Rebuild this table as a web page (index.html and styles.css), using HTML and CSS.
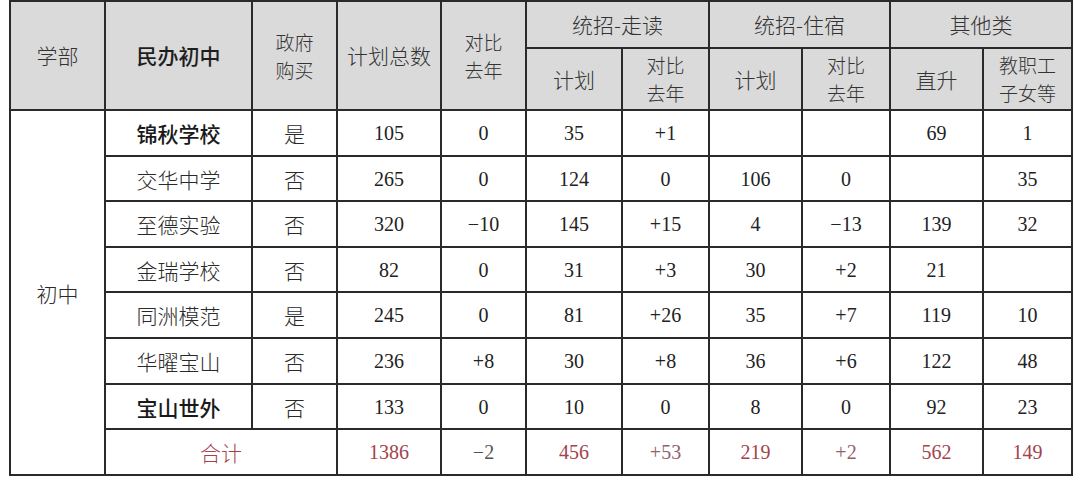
FILE: index.html
```html
<!DOCTYPE html>
<html lang="zh">
<head>
<meta charset="utf-8">
<link rel="stylesheet" href="styles.css">
</head>
<body>
<div class="wrap">
<table class="plan">
  <colgroup>
    <col class="c95"><col class="c147"><col class="c85"><col class="c104"><col class="c85">
    <col class="c96"><col class="c87"><col class="c93"><col class="c88"><col class="c93"><col class="c89">
  </colgroup>
  <thead>
    <tr class="h1">
      <th rowspan="2">学部</th>
      <th rowspan="2" class="b">民办初中</th>
      <th rowspan="2"><span class="ln">政府</span><span class="ln">购买</span></th>
      <th rowspan="2">计划总数</th>
      <th rowspan="2"><span class="ln">对比</span><span class="ln">去年</span></th>
      <th colspan="2">统招-走读</th>
      <th colspan="2">统招-住宿</th>
      <th colspan="2">其他类</th>
    </tr>
    <tr class="h2">
      <th>计划</th><th><span class="ln">对比</span><span class="ln">去年</span></th>
      <th>计划</th><th><span class="ln">对比</span><span class="ln">去年</span></th>
      <th>直升</th><th><span class="ln">教职工</span><span class="ln">子女等</span></th>
    </tr>
  </thead>
  <tbody>
    <tr class="r46">
      <td rowspan="8" class="zh">初中</td>
      <td class="zh b">锦秋学校</td><td class="zh">是</td>
      <td>105</td><td>0</td><td>35</td><td>+1</td><td></td><td></td><td>69</td><td>1</td>
    </tr>
    <tr class="r45">
      <td class="zh">交华中学</td><td class="zh">否</td>
      <td>265</td><td>0</td><td>124</td><td>0</td><td>106</td><td>0</td><td></td><td>35</td>
    </tr>
    <tr class="r46">
      <td class="zh">至德实验</td><td class="zh">否</td>
      <td>320</td><td>−10</td><td>145</td><td>+15</td><td>4</td><td>−13</td><td>139</td><td>32</td>
    </tr>
    <tr class="r45">
      <td class="zh">金瑞学校</td><td class="zh">否</td>
      <td>82</td><td>0</td><td>31</td><td>+3</td><td>30</td><td>+2</td><td>21</td><td></td>
    </tr>
    <tr class="r46">
      <td class="zh">同洲模范</td><td class="zh">是</td>
      <td>245</td><td>0</td><td>81</td><td>+26</td><td>35</td><td>+7</td><td>119</td><td>10</td>
    </tr>
    <tr class="r46">
      <td class="zh">华曜宝山</td><td class="zh">否</td>
      <td>236</td><td>+8</td><td>30</td><td>+8</td><td>36</td><td>+6</td><td>122</td><td>48</td>
    </tr>
    <tr class="r45">
      <td class="zh b">宝山世外</td><td class="zh">否</td>
      <td>133</td><td>0</td><td>10</td><td>0</td><td>8</td><td>0</td><td>92</td><td>23</td>
    </tr>
    <tr class="r46 total">
      <td colspan="2" class="zh">合计</td>
      <td>1386</td><td class="grey">−2</td><td>456</td><td class="soft">+53</td><td>219</td><td class="soft">+2</td><td>562</td><td>149</td>
    </tr>
  </tbody>
</table>
</div>
</body>
</html>
```
FILE: styles.css
```css
html, body {
  margin: 0;
  padding: 0;
  background: #ffffff;
}
.wrap {
  padding: 0 0 0 9px;
}
.plan {
  border-collapse: collapse;
  table-layout: fixed;
  width: 1062px;
  font-family: "Liberation Serif", "Noto Sans CJK SC", serif;
  color: #222;
}
.c95 { width: 95px; }
.c147 { width: 147px; }
.c85 { width: 85px; }
.c104 { width: 104px; }
.c96 { width: 96px; }
.c87 { width: 87px; }
.c93 { width: 93px; }
.c88 { width: 88px; }
.c89 { width: 89px; }
.plan th, .plan td {
  border: 2px solid #2a2a2a;
  text-align: center;
  vertical-align: middle;
  padding: 0;
}
.plan th {
  background: #dadada;
  color: #333;
  font-family: "Noto Sans CJK SC", sans-serif;
  font-weight: 300;
  font-size: 21px;
  line-height: 27px;
}
.plan th .ln {
  display: block;
  font-size: 19px;
  height: 28px;
  line-height: 28px;
}
.plan th.b {
  font-weight: 500;
  color: #1e1e1e;
}
.h1 { height: 47px; }
.h2 { height: 62px; }
.r46 { height: 46px; }
.r45 { height: 45px; }
.plan td {
  font-size: 20px;
  line-height: 22px;
}
.plan td.zh {
  font-family: "Noto Sans CJK SC", sans-serif;
  font-weight: 300;
  font-size: 21px;
  color: #2a2a2a;
}
.plan td.zh.b {
  font-weight: 500;
  color: #1a1a1a;
}
.total td, .total td.zh {
  color: #a3434d;
}
.total td.grey {
  color: #555;
}
.total td.soft {
  color: #94606a;
}
```
